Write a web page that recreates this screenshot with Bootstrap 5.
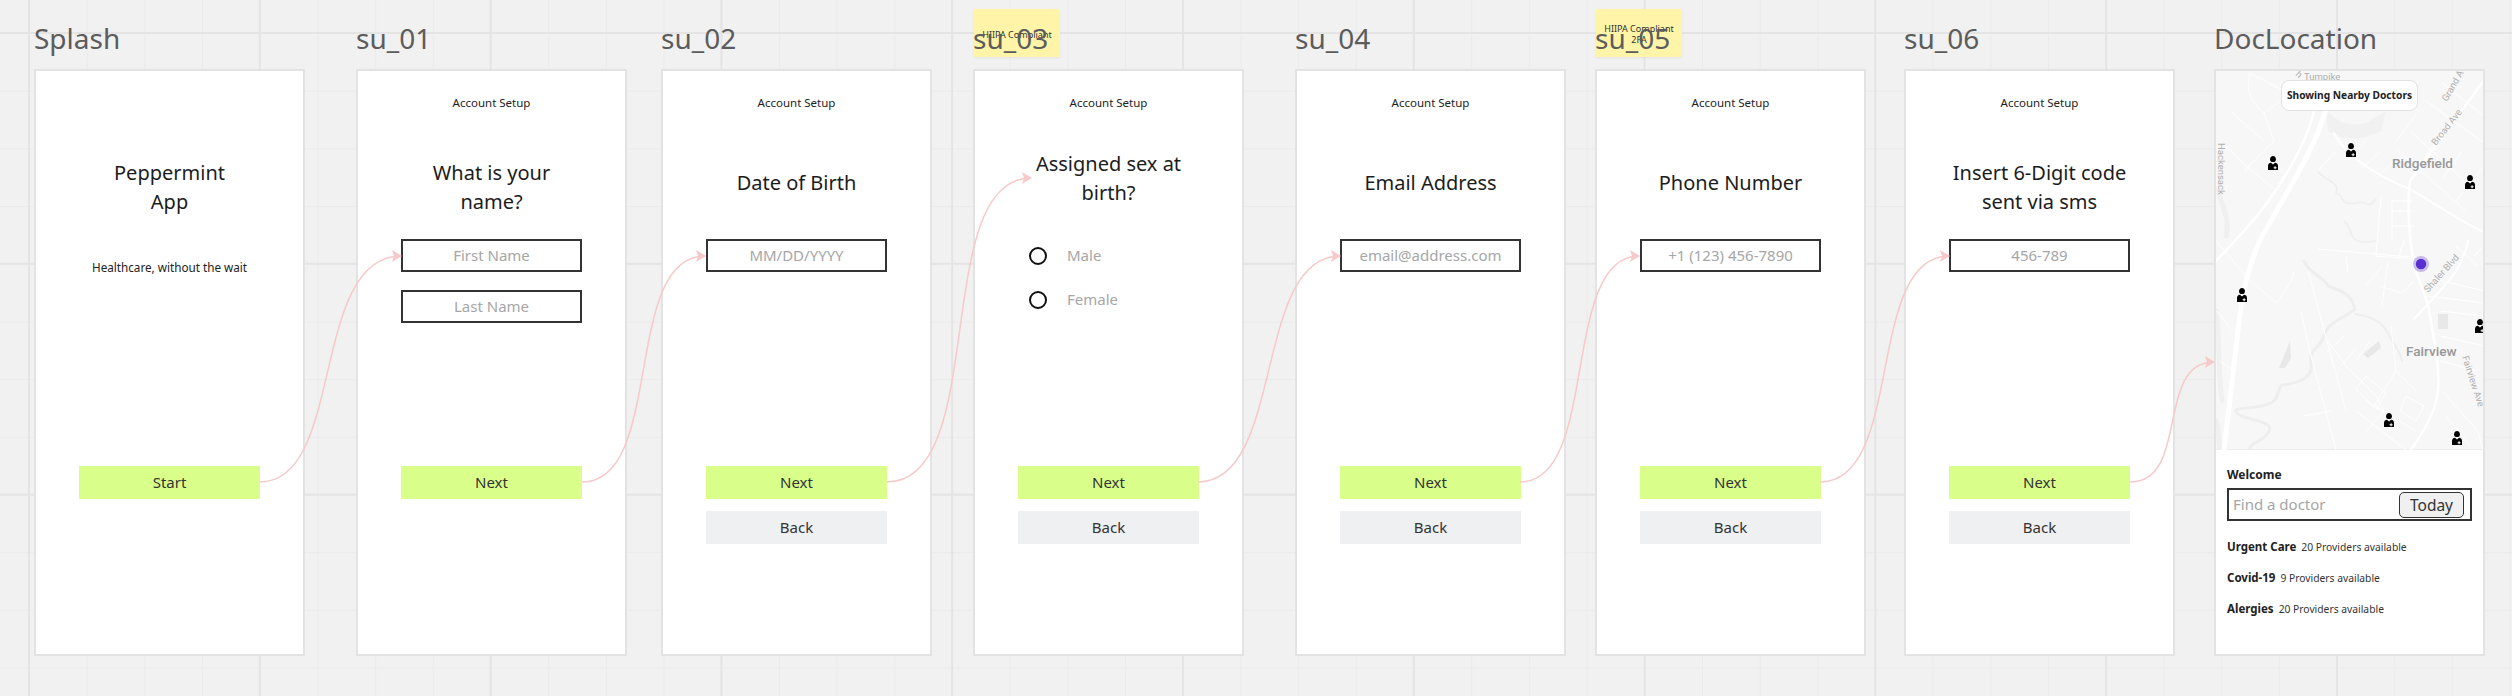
<!DOCTYPE html>
<html lang="en">
<head>
<meta charset="utf-8">
<title>Peppermint App flow</title>
<link href="https://cdn.jsdelivr.net/npm/bootstrap@5.3.0/dist/css/bootstrap.min.css" rel="stylesheet">
<style>
html,body{margin:0;height:696px;overflow:hidden}
body{font-family:"Noto Sans",sans-serif;background-color:#f1f1f1}
.board{position:relative;width:2512px;height:696px;overflow:hidden;padding:19px 0 0 34px;
 background-image:
  linear-gradient(to right,#e4e4e4 2px,transparent 2px),
  linear-gradient(to bottom,#e4e4e4 2px,transparent 2px),
  linear-gradient(to right,#ebebeb 1px,transparent 1px),
  linear-gradient(to bottom,#ebebeb 1px,transparent 1px);
 background-size:230.8px 230.8px,230.8px 230.8px,57.7px 57.7px,57.7px 57.7px;
 background-position:28px 32px,28px 32px,29px 33px,29px 33px}
.frame-col{width:271px;flex:none;position:relative;z-index:2}
.ml-a{margin-left:51px}.ml-b{margin-left:34px}.ml-c{margin-left:41px}.ml-d{margin-left:51px}.ml-e{margin-left:29px}.ml-f{margin-left:38px}.ml-g{margin-left:39px}
.frame-title{font-size:28px;line-height:38px;height:50px;color:#5c5c5c;white-space:nowrap;position:relative;z-index:3}
.screen{width:271px;height:587px;background:#fff;border:2px solid #e3e3e3;color:#1f1f1f;overflow:hidden;position:relative;z-index:2}
.scr-body{height:395px}
.acct{font-size:11.5px;line-height:16px;padding-top:24px;color:#222}
.hd-wrap{height:128px}
.hd{font-size:20px;line-height:29px;margin:0;font-weight:400;color:#1c1c1c}
.hd-one{padding-top:57px}.hd-two{padding-top:47px}.hd-sex{padding-top:38px}
.splash-hd{padding-top:87px}
.tagline{font-size:11.7px;line-height:16px;margin-top:43px;color:#222}
.field{width:181px;height:33px;border:2px solid #333;border-radius:0;font-size:15px;line-height:29px;padding:0;color:#a6a6a6;background:#fff;text-align:center}
.fields{gap:18px}
.radios{padding-left:54px;gap:11px}
.radios .form-check{height:33px;margin:0;padding:0;gap:20px}
.radios .form-check-input{width:18px;height:18px;margin:0;float:none;border:2px solid #111;background-color:#fff;flex:none}
.radios .form-check-label{font-size:15px;color:#a6a6a6;opacity:1}
.actions{gap:12px}
.act{width:181px;height:33px;border:0;border-radius:0;font-size:15px;line-height:33px;padding:0;color:#333}
.act-next,.act-next:hover{background:#d9ff8a;color:#333}
.act-back,.act-back:hover{background:#eff0f2;color:#333}
.map-box{height:379px;background:#f7f7f7;border-bottom:1px solid #ececec;position:relative}
.map-svg{display:block}
.pill{position:absolute;left:65px;top:9px;width:137px;height:31px;background:#fff;border:1.5px solid #e2e2e2;border-radius:8px;font-size:10.2px;font-weight:700;line-height:28px;text-align:center;color:#222;white-space:nowrap}
.doc-low{padding:17px 11px 0}
.welcome{font-size:12px;line-height:16px;font-weight:700;color:#222;margin-bottom:5px}
.search{height:33px;border:2px solid #333;border-radius:0;padding:0 6px 0 4px;font-size:15px;color:#a6a6a6;background:#fff}
.today{width:65px;height:26px;padding:0;background:#f0f0f0;border:1.5px solid #333;border-radius:5px;font-size:15.5px;line-height:22px;color:#333}
.care{margin-top:15px;gap:5px;line-height:16px;color:#333;font-size:10.3px;white-space:nowrap}
.search+.care{margin-top:18px}
.care b{font-size:11.5px;color:#222}
.sticky-note{position:absolute;top:9px;width:86px;height:48px;background:#fff4a8;box-shadow:0 1px 2px rgba(0,0,0,.06);font-size:9px;line-height:11px;text-align:center;color:#333;z-index:1}
.note-a{left:974px;padding-top:20px}
.note-b{left:1596px;padding-top:14px}
.links{position:absolute;left:0;top:0;z-index:4;pointer-events:none}
.link{fill:none;stroke:#f7c9c9;stroke-width:1.5}
.mlabel{fill:#b0b0b0;font-family:"Roboto","Noto Sans",sans-serif;font-size:9.5px}
.mcity{fill:#979797;font-family:"Roboto","Noto Sans",sans-serif;font-size:13.6px;font-weight:500}
</style>
</head>
<body>
<div class="board d-flex align-items-start">
  <div class="sticky-note note-a">HIIPA Compliant</div>
  <div class="sticky-note note-b">HIIPA Compliant<br>2FA</div>

  <section class="frame-col">
    <div class="frame-title">Splash</div>
    <div class="screen d-flex flex-column align-items-center">
      <div class="scr-body text-center">
        <h2 class="hd splash-hd">Peppermint<br>App</h2>
        <p class="tagline">Healthcare, without the wait</p>
      </div>
      <div class="actions d-flex flex-column"><button class="btn act act-next">Start</button></div>
    </div>
  </section>

  <section class="frame-col ml-a">
    <div class="frame-title">su_01</div>
    <div class="screen d-flex flex-column align-items-center">
      <div class="scr-body text-center">
        <div class="acct">Account Setup</div>
        <div class="hd-wrap hd-two"><h2 class="hd">What is your<br>name?</h2></div>
        <div class="fields d-flex flex-column">
          <div class="form-control field">First Name</div>
          <div class="form-control field">Last Name</div>
        </div>
      </div>
      <div class="actions d-flex flex-column"><button class="btn act act-next">Next</button></div>
    </div>
  </section>

  <section class="frame-col ml-b">
    <div class="frame-title">su_02</div>
    <div class="screen d-flex flex-column align-items-center">
      <div class="scr-body text-center">
        <div class="acct">Account Setup</div>
        <div class="hd-wrap hd-one"><h2 class="hd">Date of Birth</h2></div>
        <div class="form-control field">MM/DD/YYYY</div>
      </div>
      <div class="actions d-flex flex-column"><button class="btn act act-next">Next</button><button class="btn act act-back">Back</button></div>
    </div>
  </section>

  <section class="frame-col ml-c">
    <div class="frame-title">su_03</div>
    <div class="screen d-flex flex-column align-items-center">
      <div class="scr-body text-center w-100">
        <div class="acct">Account Setup</div>
        <div class="hd-wrap hd-sex"><h2 class="hd">Assigned sex at<br>birth?</h2></div>
        <div class="radios d-flex flex-column">
          <div class="form-check d-flex align-items-center"><input class="form-check-input" type="radio" name="sex" id="m"><label class="form-check-label" for="m">Male</label></div>
          <div class="form-check d-flex align-items-center"><input class="form-check-input" type="radio" name="sex" id="f"><label class="form-check-label" for="f">Female</label></div>
        </div>
      </div>
      <div class="actions d-flex flex-column"><button class="btn act act-next">Next</button><button class="btn act act-back">Back</button></div>
    </div>
  </section>

  <section class="frame-col ml-d">
    <div class="frame-title">su_04</div>
    <div class="screen d-flex flex-column align-items-center">
      <div class="scr-body text-center">
        <div class="acct">Account Setup</div>
        <div class="hd-wrap hd-one"><h2 class="hd">Email Address</h2></div>
        <div class="form-control field">email@address.com</div>
      </div>
      <div class="actions d-flex flex-column"><button class="btn act act-next">Next</button><button class="btn act act-back">Back</button></div>
    </div>
  </section>

  <section class="frame-col ml-e">
    <div class="frame-title">su_05</div>
    <div class="screen d-flex flex-column align-items-center">
      <div class="scr-body text-center">
        <div class="acct">Account Setup</div>
        <div class="hd-wrap hd-one"><h2 class="hd">Phone Number</h2></div>
        <div class="form-control field">+1 (123) 456-7890</div>
      </div>
      <div class="actions d-flex flex-column"><button class="btn act act-next">Next</button><button class="btn act act-back">Back</button></div>
    </div>
  </section>

  <section class="frame-col ml-f">
    <div class="frame-title">su_06</div>
    <div class="screen d-flex flex-column align-items-center">
      <div class="scr-body text-center">
        <div class="acct">Account Setup</div>
        <div class="hd-wrap hd-two"><h2 class="hd">Insert 6-Digit code<br>sent via sms</h2></div>
        <div class="form-control field">456-789</div>
      </div>
      <div class="actions d-flex flex-column"><button class="btn act act-next">Next</button><button class="btn act act-back">Back</button></div>
    </div>
  </section>

  <section class="frame-col ml-g">
    <div class="frame-title">DocLocation</div>
    <div class="screen">
      <div class="map-box">
        <svg class="map-svg" width="267" height="379" viewBox="0 0 267 379">
          <defs>
            <symbol id="doc-pin" viewBox="0 0 10 14">
              <circle cx="5" cy="3.2" r="2.9" fill="#000"/>
              <path d="M3.3 .8 Q5 -.3 6.7 .8 L6.7 2 H3.3Z" fill="#000"/>
              <path d="M0 14 V10 Q0 7 3 6.8 L5 8.6 L7 6.8 Q10 7 10 10 V14Z" fill="#000"/>
              <path d="M6.6 10.3h1v1h1v1h-1v1h-1v-1h-1v-1h1z" fill="#fff"/>
            </symbol>
          </defs>
          <!-- water and parks -->
          <g fill="none" stroke="#eeeeee" stroke-linecap="round">
            <path stroke-width="3" d="M88 190 C95 205 108 205 112 215 C125 220 135 222 139 238 C128 248 112 250 108 265 C104 278 92 278 95 292 C98 305 85 312 66 314 C58 322 68 332 40 336 C20 338 14 338 25 345 C40 350 60 352 52 362 C45 372 36 370 32 379"/>
            <path stroke-width="2" d="M139 243 C155 245 165 250 172 262 C176 272 184 278 186 290"/>
            <path stroke-width="1.5" d="M101 100 C110 110 125 112 120 122 C130 125 122 135 140 132 C152 128 150 140 160 128 M128 150 C140 160 128 175 160 170"/>
            <path stroke-width="5" stroke="#f0f0f0" d="M2 120 C8 140 14 150 10 165 M0 240 C4 270 2 300 6 330 M0 350 C4 360 2 370 4 379"/>
          </g>
          <path fill="#e8e8e8" d="M147 283 L163 270 L165 277 L152 287Z M222 243h10v15h-10Z M63 297 L74 270 L75 287 L69 297Z"/>
          <path fill="#f1f1f1" d="M110 38 Q125 58 150 52 L170 40 L165 60 Q135 75 112 60Z"/>
          <!-- main roads -->
          <g fill="none" stroke="#fff" stroke-linecap="round" stroke-linejoin="round">
            <path stroke-width="5" d="M110 38 C100 75 72 120 46 165 C32 195 26 222 22 260 L8 379"/>
            <path stroke-width="2.5" d="M98 40 C90 75 60 125 28 160 L0 190"/>
            <path stroke-width="2.5" d="M269 8 L194 110 C190 140 194 170 198 195 L212 233 C216 262 224 285 222 320 C220 340 208 360 195 379"/>
            <path stroke-width="2" d="M252 170 C246 200 228 215 212 233 L198 248"/>
            <path stroke-width="2" d="M118 62 C130 85 160 105 194 118 C215 130 235 145 269 162"/>
          </g>
          <!-- minor streets -->
          <g fill="none" stroke="#fff" stroke-width="1">
            <path d="M34 2 L68 20 L98 36 M34 2 C30 20 34 30 48 42 L70 26 M48 42 L58 70 L28 100 M14 40 L48 70 M4 70 L30 95 L58 118"/>
            <path d="M194 60 L260 120 M180 78 L250 140 M210 30 L268 72 M226 12 L268 45 M200 44 L180 70 M226 60 L208 88 M246 80 L226 108 M268 95 L240 130"/>
            <path d="M196 130 H176 V170 M176 140 H196 M176 155 H198 M165 125 L160 185 L200 188 M188 170 L182 188"/>
            <path d="M130 88 L150 70 M145 98 L165 80 M160 108 L180 88 M120 80 L100 102"/>
            <path d="M102 178 L196 186 M130 185 L132 202 M172 190 L166 235 M164 215 L186 222 L198 210 M166 195 L150 215"/>
            <path d="M225 240 L268 245 M218 208 L268 220 M212 225 L268 232 M225 265 L268 275 M224 290 L262 300 M240 175 L262 195 M258 185 L268 175"/>
            <path d="M112 270 L130 295 L160 325 L168 340 L150 360 M128 265 L110 282 M140 278 L125 295 M154 270 L140 290 M150 305 L170 322 L160 338 L140 318Z M175 255 L180 300 L158 335"/>
            <path d="M190 325 L208 335 L200 350 L184 340Z M180 300 L200 320 M226 320 L262 360 L267 379 M230 345 L254 375 M140 340 L190 379 M150 330 L200 360"/>
            <path d="M0 240 C10 250 18 265 24 262 M0 170 L30 205 L60 232 M60 232 C70 220 76 210 78 200 M4 290 L18 300"/>
            <path d="M85 240 C95 290 110 340 120 379 M92 200 L130 340 M88 345 L115 340"/>
          </g>
          <!-- labels -->
          <text class="mlabel" x="88" y="9">Tumpike</text>
          <text class="mlabel" transform="translate(79 4) rotate(42)">h</text>
          <text class="mlabel" transform="translate(231 31) rotate(-60)">Grand A</text>
          <text class="mlabel" transform="translate(220 75) rotate(-52)">Broad Ave</text>
          <text class="mlabel" transform="translate(212 222) rotate(-48)">Shaler Blvd</text>
          <text class="mlabel" transform="translate(246 286) rotate(72)">Fairview Ave</text>
          <text class="mlabel" transform="translate(2 72) rotate(90)">Hackensack</text>
          <text class="mcity" x="176" y="97">Ridgefield</text>
          <text class="mcity" x="190" y="285">Fairview</text>
          <!-- position -->
          <circle cx="205" cy="193" r="8" fill="#c9bdea"/>
          <circle cx="205" cy="193" r="5.2" fill="#5a2fd1"/>
          <!-- doctors -->
          <use href="#doc-pin" x="52" y="85" width="10" height="14"/>
          <use href="#doc-pin" x="130" y="72" width="10" height="14"/>
          <use href="#doc-pin" x="249" y="104" width="10" height="14"/>
          <use href="#doc-pin" x="21" y="217" width="10" height="14"/>
          <use href="#doc-pin" x="259" y="248" width="10" height="14"/>
          <use href="#doc-pin" x="168" y="342" width="10" height="14"/>
          <use href="#doc-pin" x="236" y="360" width="10" height="14"/>
        </svg>
        <div class="pill">Showing Nearby Doctors</div>
      </div>
      <div class="doc-low">
        <div class="welcome">Welcome</div>
        <div class="search form-control d-flex align-items-center justify-content-between">
          <span>Find a doctor</span>
          <button class="btn today">Today</button>
        </div>
        <div class="care d-flex align-items-baseline"><b>Urgent Care</b><span>20 Providers available</span></div>
        <div class="care d-flex align-items-baseline"><b>Covid-19</b><span>9 Providers available</span></div>
        <div class="care d-flex align-items-baseline"><b>Alergies</b><span>20 Providers available</span></div>
      </div>
    </div>
  </section>

  <svg class="links" width="2512" height="696" viewBox="0 0 2512 696">
    <defs>
      <marker id="ah" markerWidth="10" markerHeight="12" refX="9" refY="6" orient="auto" markerUnits="userSpaceOnUse">
        <path d="M0 0 L10 6 L0 12 L2 6Z" fill="#f7c9c9"/>
      </marker>
    </defs>
    <path class="link" marker-end="url(#ah)" d="M260 482 C345 482 310 256 401 256"/>
    <path class="link" marker-end="url(#ah)" d="M582 482 C665 482 622 256 705 256"/>
    <path class="link" marker-end="url(#ah)" d="M887 482 C990 482 930 178 1031 178"/>
    <path class="link" marker-end="url(#ah)" d="M1198 482 C1285 482 1253 256 1340 256"/>
    <path class="link" marker-end="url(#ah)" d="M1520 482 C1600 482 1560 256 1639 256"/>
    <path class="link" marker-end="url(#ah)" d="M1820 482 C1905 482 1865 256 1949 256"/>
    <path class="link" marker-end="url(#ah)" d="M2130 482 C2190 482 2155 362 2214 362"/>
  </svg>
</div>
</body>
</html>
